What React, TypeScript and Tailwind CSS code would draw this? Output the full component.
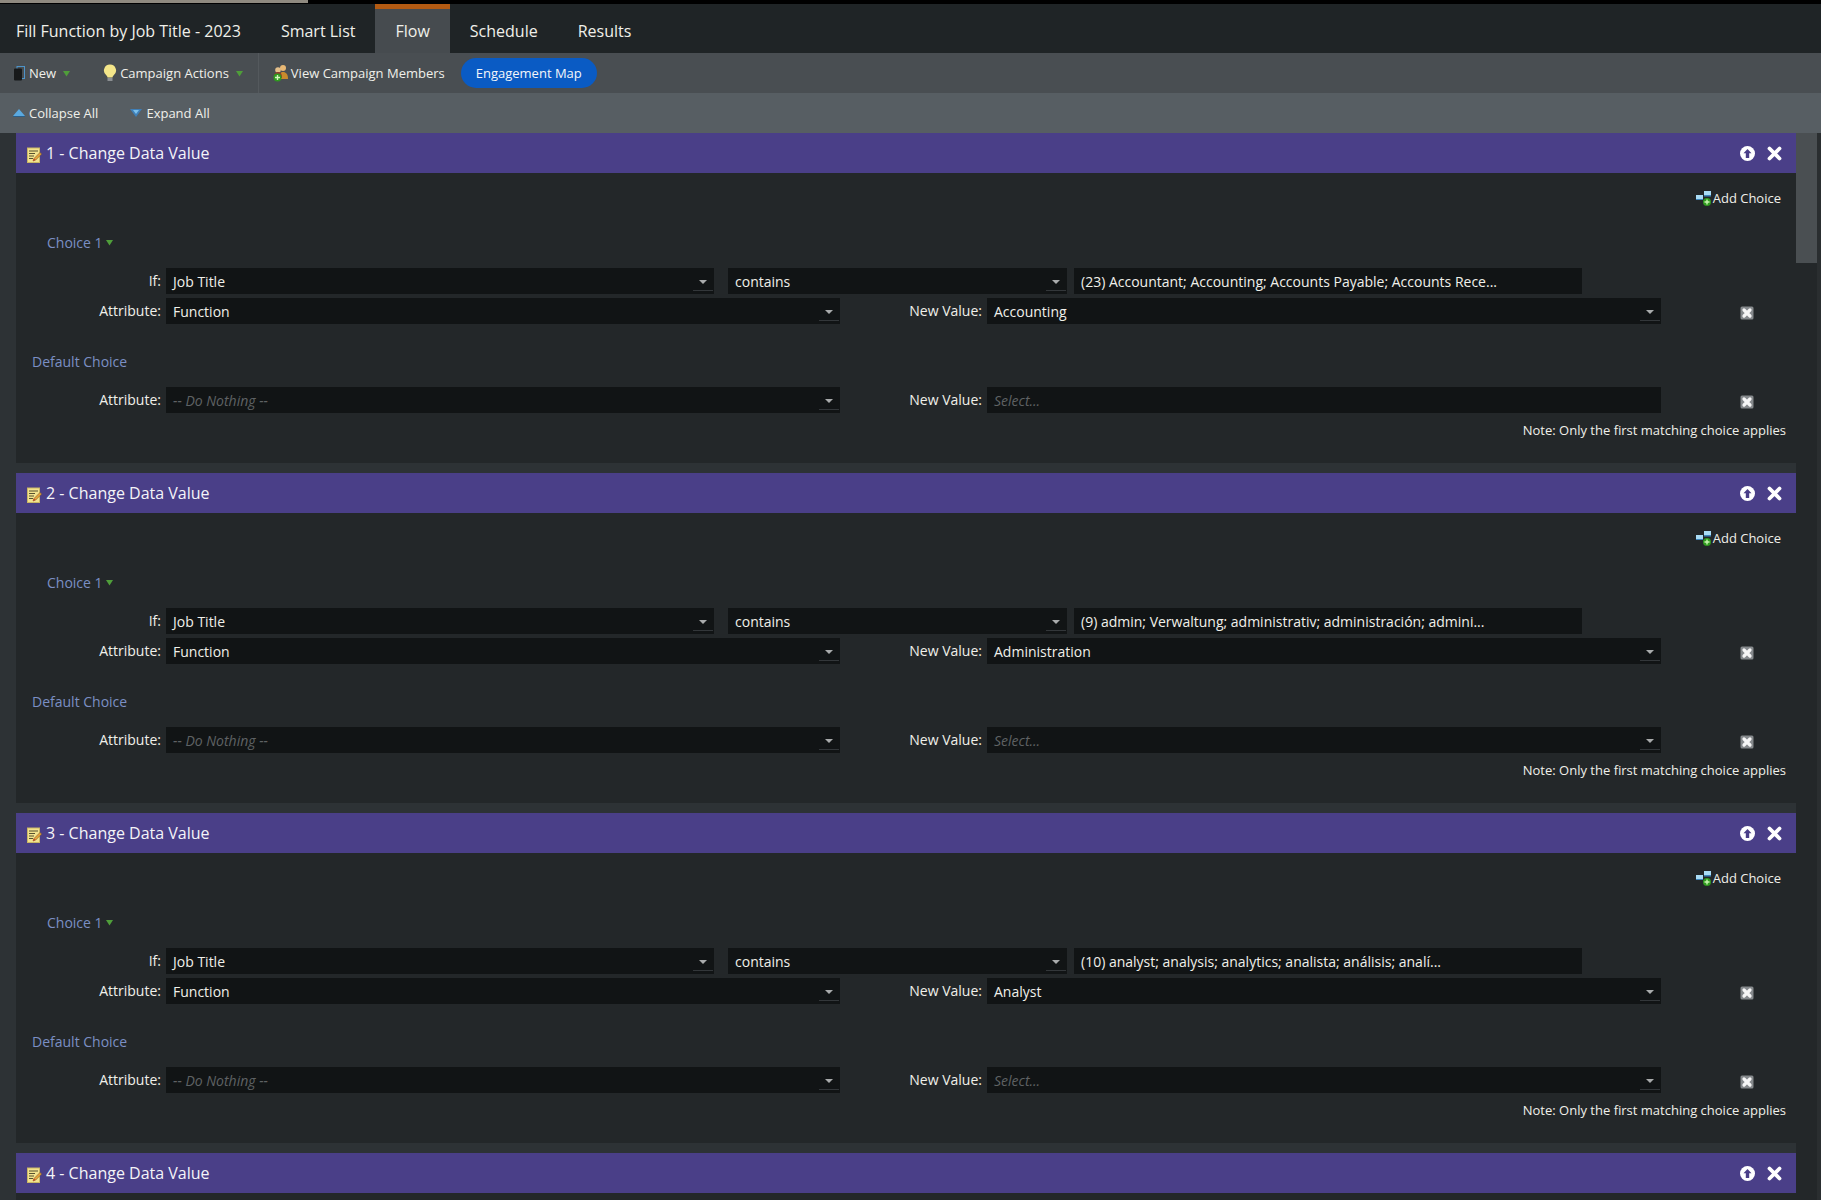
import React from 'react';

const font = "font-['Open_Sans','Noto_Sans',sans-serif]";

function NoteIcon() {
  return (
    <svg width="15" height="16" viewBox="0 0 15 16" className="mt-[3px] shrink-0">
      <rect x="0.5" y="1" width="12" height="14.5" fill="#f3e28e" stroke="#c9b765" />
      <path d="M2 4h9M2 6.5h6M2 9h5M2 11.5h4" stroke="#57512f" strokeWidth="1" />
      <path d="M6 14l1-2.5 6-6 1.6 1.6-6 6z" fill="#e8a33c" stroke="#7d5a22" strokeWidth="0.6" />
      <path d="M6 14l1-2.5 1.5 1.5z" fill="#c8402f" />
    </svg>
  );
}

function RemoveIcon() {
  return (
    <svg width="14" height="14" viewBox="0 0 14 14" className="shrink-0">
      <rect x="0.5" y="0.5" width="13" height="13" rx="1.5" fill="#85898c" />
      <path d="M4 4l6 6M10 4l-6 6" stroke="#f6f6f6" strokeWidth="3.2" strokeLinecap="round" />
    </svg>
  );
}

function AddChoiceIcon() {
  return (
    <svg width="16" height="15" viewBox="0 0 16 15" className="shrink-0">
      <rect x="0" y="4" width="7" height="4" fill="#a9dcf5" />
      <rect x="8" y="0" width="7" height="4" fill="#a9dcf5" />
      <rect x="8" y="4" width="7" height="1.5" fill="#3f86bd" />
      <rect x="0" y="8" width="7" height="1" fill="#3f86bd" />
      <circle cx="11" cy="11" r="4" fill="#2f9a1f" />
      <path d="M11 8.5v5M8.5 11h5" stroke="#c9f5b0" strokeWidth="1.4" />
    </svg>
  );
}

function HeaderButtons() {
  return (
    <div className="flex items-center gap-[12px] pr-[14px]">
      <svg width="15" height="15" viewBox="0 0 15 15">
        <circle cx="7.5" cy="7.5" r="7.5" fill="#fff" />
        <path d="M7.5 3l4 4.2H9.2V12H5.8V7.2H3.5z" fill="#4a3f88" />
      </svg>
      <svg width="15" height="15" viewBox="0 0 15 15">
        <path d="M2.5 2.5l10 10M12.5 2.5l-10 10" stroke="#fff" strokeWidth="3.8" strokeLinecap="round" />
      </svg>
    </div>
  );
}

function GreenCaret() {
  return (
    <svg width="7" height="7" viewBox="0 0 7 7" className="shrink-0">
      <path d="M0 1h7L3.5 6.5z" fill="#4f9e3a" />
    </svg>
  );
}

function Field({
  value,
  width,
  muted,
  arrow = true,
}: {
  value: string;
  width: string;
  muted?: boolean;
  arrow?: boolean;
}) {
  return (
    <div className={`flex h-[26px] items-center justify-between bg-[#111415] pl-[7px] ${width}`}>
      <span className={muted ? 'pt-px text-[14px] italic text-[#5f6264]' : 'text-[14px] text-[#f0f0ea]'}>{value}</span>
      {arrow && (
        <span className="mr-px flex h-full w-5 flex-col items-center justify-end pb-[3px]">
          <svg width="8" height="4" viewBox="0 0 8 4" className="mb-[6px]">
            <path d="M0 0h8L4 4z" fill="#a9abac" />
          </svg>
          <span className="h-px w-full bg-[#33373a]" />
        </span>
      )}
    </div>
  );
}

function Label({ text, width }: { text: string; width: string }) {
  return <div className={`${width} pr-[5px] pb-px text-right text-[14px] text-[#f0f0ea]`}>{text}</div>;
}

function Step({
  num,
  summary,
  newValue,
  defaultArrow,
}: {
  num: number;
  summary: string;
  newValue: string;
  defaultArrow: boolean;
}) {
  return (
    <div className="mb-[10px]">
      <div className="flex h-10 items-center justify-between bg-[#4a3f88]">
        <div className="flex items-center gap-[4px] pl-[11px] text-[16px] text-[#f4f4f8]">
          <NoteIcon />
          <span>{num} - Change Data Value</span>
        </div>
        <HeaderButtons />
      </div>
      <div className="bg-[#232729] pt-[15px] pb-[23px]">
        <div className="flex h-5 items-center justify-end gap-px pr-[15px] text-[13px] text-[#f0f0ea]">
          <AddChoiceIcon />
          <span className="pt-[2px]">Add Choice</span>
        </div>
        <div className="mt-[24px] flex h-5 items-center gap-[3px] pl-[31px] text-[14px] text-[#7b8fc4]">
          <span>Choice 1</span>
          <GreenCaret />
        </div>
        <div className="mt-[16px] flex items-center">
          <Label text="If:" width="w-[150px]" />
          <Field value="Job Title" width="w-[548px]" />
          <div className="w-[14px]" />
          <Field value="contains" width="w-[339px]" />
          <div className="w-[7px]" />
          <Field value={summary} width="w-[508px]" arrow={false} />
        </div>
        <div className="mt-[4px] flex items-center">
          <Label text="Attribute:" width="w-[150px]" />
          <Field value="Function" width="w-[674px]" />
          <Label text="New Value:" width="w-[147px]" />
          <Field value={newValue} width="w-[674px]" />
          <div className="ml-[79px] pt-[3px]">
            <RemoveIcon />
          </div>
        </div>
        <div className="mt-[27px] flex h-5 items-center pl-[16px] text-[14px] text-[#7b8fc4]">Default Choice</div>
        <div className="mt-[16px] flex items-center">
          <Label text="Attribute:" width="w-[150px]" />
          <Field value="-- Do Nothing --" width="w-[674px]" muted />
          <Label text="New Value:" width="w-[147px]" />
          <Field value="Select..." width="w-[674px]" muted arrow={defaultArrow} />
          <div className="ml-[79px] pt-[3px]">
            <RemoveIcon />
          </div>
        </div>
        <div className="mt-[7px] flex h-5 items-center justify-end pt-[2px] pr-[10px] text-[13px] text-[#f0f0ea]">
          Note: Only the first matching choice applies
        </div>
      </div>
    </div>
  );
}

const steps = [
  { num: 1, summary: '(23) Accountant; Accounting; Accounts Payable; Accounts Rece...', newValue: 'Accounting', defaultArrow: false },
  { num: 2, summary: '(9) admin; Verwaltung; administrativ; administración; admini...', newValue: 'Administration', defaultArrow: true },
  { num: 3, summary: '(10) analyst; analysis; analytics; analista; análisis; analí...', newValue: 'Analyst', defaultArrow: true },
];

export default function App() {
  return (
    <div className={`flex h-[1200px] w-full flex-col overflow-hidden bg-[#2d3235] ${font}`}>
      <div className="h-1 shrink-0 bg-black">
        <div className="h-[3px] w-[308px] bg-[#8f8a80]" />
      </div>

      <div className="flex h-[49px] shrink-0 items-stretch bg-[#1f2426] text-[16px] text-[#f0f0ea]">
        <div className="flex items-center pl-4 pr-5 pt-[5px]">Fill Function by Job Title - 2023</div>
        <div className="flex items-center px-5 pt-[5px]">Smart List</div>
        <div className="flex items-center border-t-[5px] border-[#b35a12] bg-[#464b4f] px-5">Flow</div>
        <div className="flex items-center px-5 pt-[5px]">Schedule</div>
        <div className="flex items-center px-5 pt-[5px]">Results</div>
      </div>

      <div className="flex h-10 shrink-0 items-center bg-[#494e52] text-[13px] text-[#f0f0ea]">
        <svg width="11" height="15" viewBox="0 0 11 15" className="ml-[14px] shrink-0">
          <rect x="3" y="0.5" width="7.5" height="12" fill="none" stroke="#4d93c9" />
          <rect x="0" y="2.5" width="8" height="12" rx="1" fill="#17191a" />
        </svg>
        <span className="ml-[4px] pt-[2px]">New</span>
        <div className="ml-[7px]"><GreenCaret /></div>
        <svg width="14" height="18" viewBox="0 0 14 18" className="ml-[33px] shrink-0">
          <path d="M7 0.5a6 6 0 0 1 3.5 10.9c-.7.6-.9 1.3-1 2.1h-5c-.1-.8-.3-1.5-1-2.1A6 6 0 0 1 7 .5z" fill="#f4e68a" />
          <rect x="4.5" y="14" width="5" height="3" fill="#8c8f92" />
        </svg>
        <span className="ml-[3px] pt-[2px]">Campaign Actions</span>
        <div className="ml-[7px]"><GreenCaret /></div>
        <div className="ml-[15px] h-full w-px bg-[#54595d]" />
        <svg width="16" height="18" viewBox="0 0 16 18" className="ml-[14px] shrink-0">
          <circle cx="10" cy="4" r="3" fill="#e8b874" />
          <path d="M6 15c0-5 1-7 4-7s5 2 5 7z" fill="#c98a2c" />
          <circle cx="5" cy="6" r="2.8" fill="#e5c08a" />
          <path d="M1 14c0-4 1-6 4-6s4 2 4 6z" fill="#8f3b2c" />
          <circle cx="4.5" cy="13.5" r="4" fill="#2f9a1f" />
          <path d="M4.5 11v5M2 13.5h5" stroke="#d3f5bc" strokeWidth="1.4" />
        </svg>
        <span className="ml-[2px] pt-[2px]">View Campaign Members</span>
        <div className="ml-[16px] flex h-[30px] items-center rounded-full bg-[#0a5bc4] px-[15px] pt-[2px] text-[#f4f6fa]">Engagement Map</div>
      </div>

      <div className="flex h-10 shrink-0 items-center bg-[#575e63] text-[13px] text-[#f0f0ea]">
        <svg width="12" height="8" viewBox="0 0 12 8" className="ml-[13px] shrink-0">
          <path d="M6 0l6 7H0z" fill="#5aa9e0" />
          <path d="M0 7h12v1H0z" fill="#2a5f8a" />
        </svg>
        <span className="ml-[4px] pt-[2px]">Collapse All</span>
        <svg width="12" height="8" viewBox="0 0 12 8" className="ml-[32px] shrink-0">
          <path d="M0 0h12L6 8z" fill="#3f7fb8" />
          <path d="M3 1h6L6 5z" fill="#7cc0ec" />
        </svg>
        <span className="ml-[4px] pt-[2px]">Expand All</span>
      </div>

      <div className="flex min-h-0 flex-1">
        <div className="flex min-w-0 flex-1 flex-col overflow-hidden pl-4">
          {steps.map((s) => (
            <Step key={s.num} {...s} />
          ))}
          {/* step 4 runs off the bottom of the window, only its header shows */}
          <div className="flex h-10 shrink-0 items-center justify-between bg-[#4a3f88]">
            <div className="flex items-center gap-[4px] pl-[11px] text-[16px] text-[#f4f4f8]">
              <NoteIcon />
              <span>4 - Change Data Value</span>
            </div>
            <HeaderButtons />
          </div>
          <div className="flex-1 bg-[#232729]" />
        </div>
        <div className="w-[21px] shrink-0 bg-[#232729]">
          <div className="h-[130px] bg-[#4a4f52]" />
        </div>
        <div className="w-1 shrink-0 bg-[#2a2e30]" />
      </div>
    </div>
  );
}
